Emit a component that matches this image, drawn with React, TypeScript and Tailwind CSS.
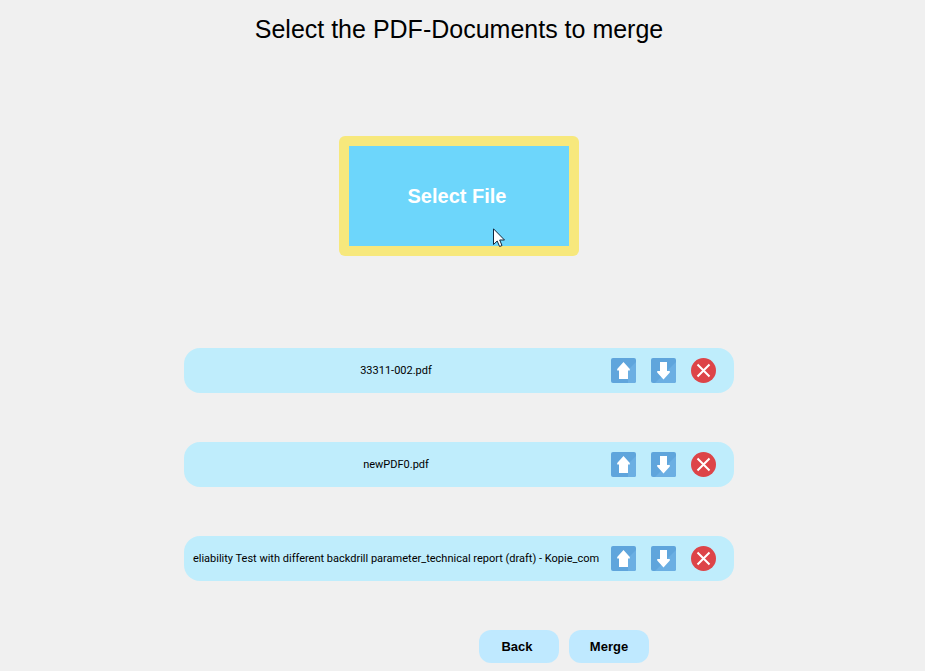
import React from "react";

const files = [
  "33311-002.pdf",
  "newPDF0.pdf",
  "eliability Test with different backdrill parameter_technical report (draft) - Kopie_com",
];

function ArrowIcon({ down = false }: { down?: boolean }) {
  return (
    <svg viewBox="0 0 25 25" className="block size-[25px]" aria-hidden="true">
      <rect width="25" height="25" rx="2" fill="#5fa5dc" />
      <path
        d={down ? "M25 4V23a2 2 0 0 1-2 2H4Z" : "M25 4V23a2 2 0 0 1-2 2H17V12Z"}
        fill="#6bafe3"
      />
      <path
        d={
          down
            ? "M9 4h7v9h2.800v1.500L12.500 21.500 6.200 14.500V13H9Z"
            : "M12.500 4 18.800 11V12.500H17V21H8V12.500H6.200V11Z"
        }
        fill="#ffffff"
      />
    </svg>
  );
}

function RemoveIcon() {
  return (
    <svg viewBox="0 0 25 25" className="block size-[25px]" aria-hidden="true">
      <circle cx="12.500" cy="12.500" r="12.500" fill="#dd4448" />
      <path d="M6.500 6.500 18.500 18.500M18.500 6.500 6.500 18.500" stroke="#ffffff" strokeWidth="2" fill="none" />
    </svg>
  );
}

function Pointer() {
  return (
    <svg
      viewBox="0 0 12 20"
      className="pointer-events-none absolute bottom-2 left-[154px] h-5 w-3"
      aria-hidden="true"
    >
      <path
        d="M.5.8V16.500L4.200 13 6.600 18.500 9 17.500 6.700 12H11.500Z"
        fill="#ffffff"
        stroke="#10253a"
        strokeWidth="1"
      />
    </svg>
  );
}

function FileRow({ name }: { name: string }) {
  return (
    <li className="flex h-[45px] items-center justify-between rounded-2xl bg-[#bfedfc] pr-[18px] pl-2">
      <span className="flex w-[408px] justify-center overflow-hidden whitespace-nowrap font-[Roboto,sans-serif] text-[11px] leading-4 text-black">
        {name}
      </span>
      <div className="flex gap-[15px]">
        <button type="button" aria-label={`Move ${name} up`}>
          <ArrowIcon />
        </button>
        <button type="button" aria-label={`Move ${name} down`}>
          <ArrowIcon down />
        </button>
        <button type="button" aria-label={`Remove ${name}`}>
          <RemoveIcon />
        </button>
      </div>
    </li>
  );
}

export default function App() {
  return (
    <main className="flex min-h-screen flex-col items-center bg-[#f0f0f0] pt-3 pr-[7px] pb-2 font-['Liberation_Sans',Arial,sans-serif] text-black">
      <h1 className="text-[25px] leading-[34px]">Select the PDF-Documents to merge</h1>
      <button
        type="button"
        className="relative mt-[90px] h-[120px] w-60 rounded-md bg-[#f7e87c] p-[10px] text-xl font-bold text-white"
      >
        <span className="flex h-full items-center justify-center bg-[#6dd6fb] pr-1">Select File</span>
        <Pointer />
      </button>
      <div className="mt-[92px] w-full max-w-[550px]">
        <ul className="flex flex-col gap-[49px]">
          {files.map((name) => (
            <FileRow key={name} name={name} />
          ))}
        </ul>
        <div className="mt-[49px] flex justify-end gap-[10px] pr-[85px] text-[13px] font-bold">
          <button type="button" className="h-[33px] w-20 rounded-xl bg-[#bfe9ff] pr-1">
            Back
          </button>
          <button type="button" className="h-[33px] w-20 rounded-xl bg-[#bfe9ff]">
            Merge
          </button>
        </div>
      </div>
    </main>
  );
}
